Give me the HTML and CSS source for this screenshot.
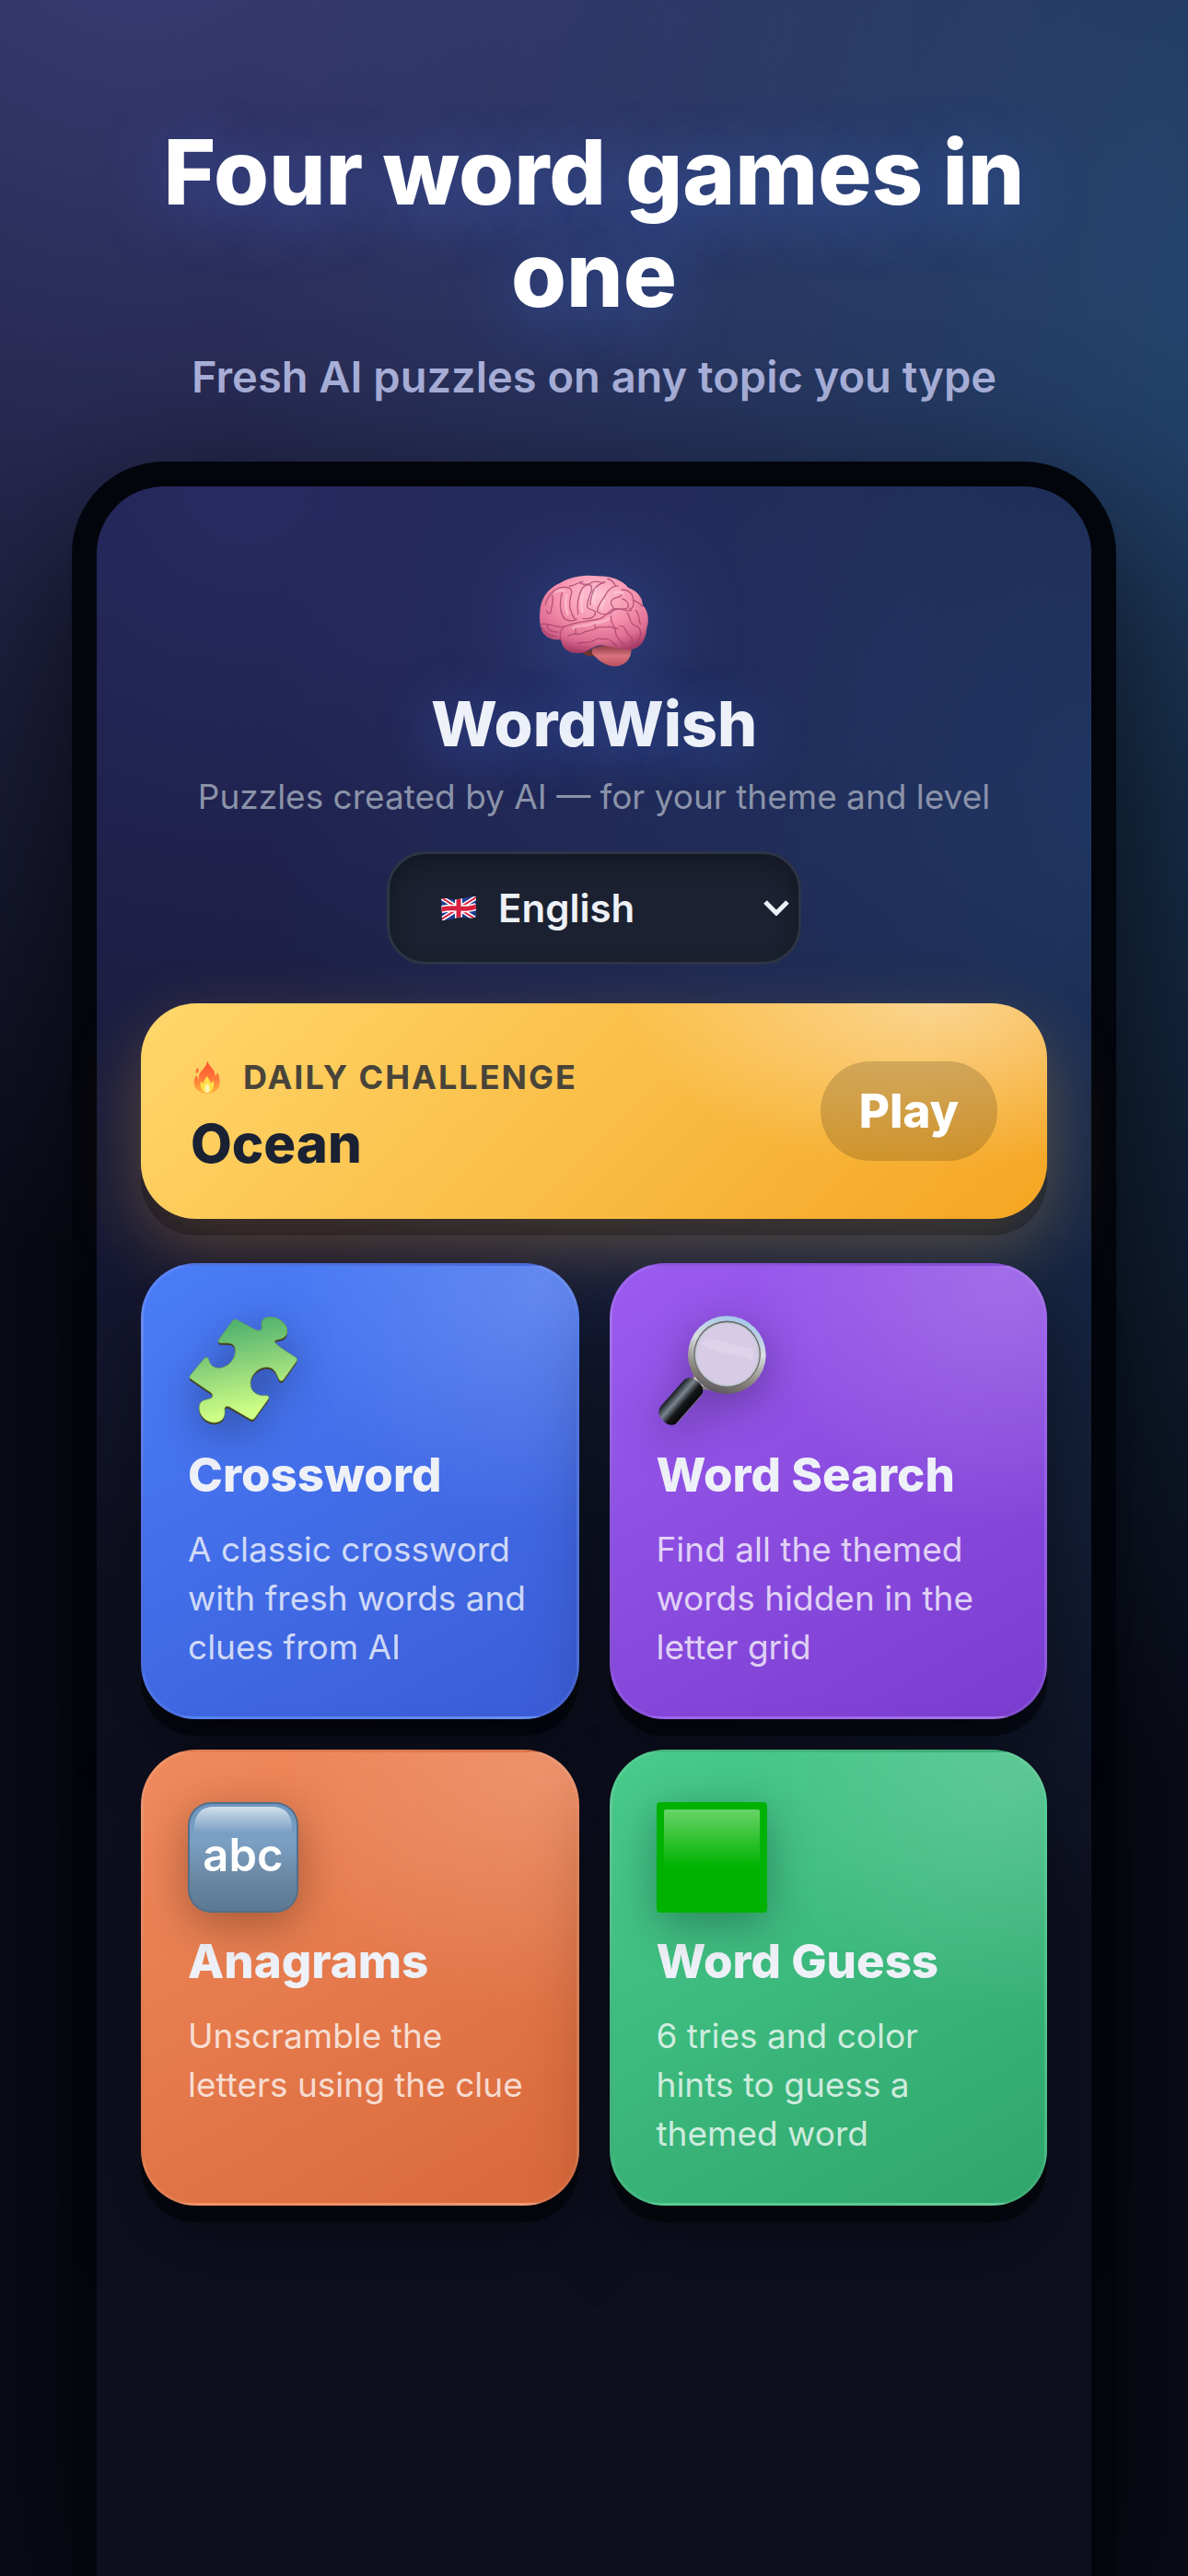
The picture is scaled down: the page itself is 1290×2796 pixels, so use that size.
FILE: index.html
```html
<!DOCTYPE html>
<html lang="en">
<head>
<meta charset="utf-8">
<meta name="viewport" content="width=device-width, initial-scale=1">
<title>WordWish</title>
<link rel="stylesheet" href="styles.css">
</head>
<body>
<div class="stage">
  <header class="promo">
    <h1 class="promo-title">Four word games in one</h1>
    <p class="promo-sub">Fresh AI puzzles on any topic you type</p>
  </header>

  <main class="phone">
    <div class="brand">
      <svg class="brain" viewBox="76 72 360 300" aria-hidden="true">
        <defs>
          <radialGradient id="brainFill" cx="0.52" cy="0.25" r="0.75">
            <stop offset="0" stop-color="#ffc4d4"/>
            <stop offset="0.45" stop-color="#f795b0"/>
            <stop offset="0.8" stop-color="#dd6d92"/>
            <stop offset="1" stop-color="#a83c66"/>
          </radialGradient>
          <linearGradient id="stemFill" x1="0" y1="0" x2="0" y2="1">
            <stop offset="0" stop-color="#8a3a44"/>
            <stop offset="0.5" stop-color="#d9737c"/>
            <stop offset="1" stop-color="#b9525f"/>
          </linearGradient>
        </defs>
        <path fill="#6d3532" d="M216 322l38-8 12 22c-16 2-42 2-50-14z"/>
        <path fill="url(#stemFill)" d="M250 312c30-14 90-14 128 0 0 38-26 58-56 58-34-2-56-24-72-42z"/>
        <path fill="url(#brainFill)" d="M80 190c2-40 26-76 66-92 36-22 84-27 124-22 46 0 78 14 98 38 30 10 46 32 47 58 16 14 22 44 13 73-3 42-23 66-52 70-42 2-70-12-98-14-26 2-40 24-74 26-34 0-52-18-54-38-2-12-4-4-20-6-26-4-44-20-46-38-6-18-6-38-4-55z"/>
        <g fill="none" stroke="#a3406a" stroke-width="4" stroke-linecap="round" stroke-linejoin="round" opacity="0.75">
          <path d="M98 168c6-26 26-52 56-56 26-2 34 8 26 30-8 30-2 52 14 74"/>
          <path d="M120 140c6 14-2 32-4 50-2 14-14 6-14-2"/>
          <path d="M152 130c-8 28-8 58 4 80 10 14 32 14 44 6"/>
          <path d="M204 200c-4-30 0-60 12-82 8-14 28-20 32-8 4 14-12 36-14 58-2 20 14 12 26 24 4 16-18 26-40 22"/>
          <path d="M250 130c8-18 22-30 42-34M244 170c-2-20 6-34 14-50"/>
          <path d="M266 192c2-24 18-38 26-52 8-18 26-34 42-32M266 192c18 12 42 12 52-4 6-20-14-14-4-34 10-12 30-6 32-18"/>
          <path d="M318 188c20-10 34-2 48-8 6-14-4-26-18-30M346 120c24 0 38 14 38 34 4 16-2 28-12 30M384 154c14 4 20 12 30 20"/>
          <path d="M84 232c30-6 54 18 82 6 40-16 72-14 104-22 26-6 30-28 54-34 22-2 34 10 54 6M160 240c-16 12-16 30-12 46"/>
          <path d="M170 272c16-14 30-2 48-10 18-14 34-6 44-16 14-8 22-2 34-4 18-6 26 8 38 4"/>
          <path d="M196 246v18M262 246l-4-14M204 294c24-4 38 2 54-10 16-12 26 2 38-4 14 2 22 12 34 24"/>
          <path d="M312 206c-6 26 18 32 14 52 2 22 22 32 32 46M340 238c22-2 18 26 34 34 8 4 6 14 4 20M364 196c10 6 6 28 20 38 10 6 22 4 24 26 0 16-8 28-16 38"/>
          <path d="M392 188c16 14 6 32 16 44M176 108c20 2 24-14 44-14M210 98c14 8 28 6 40-2 16-8 26 4 38 0M300 84c12 4 22 14 26 24M104 232c-2 14 8 26 36 26M88 246c10 20 28 26 46 26"/>
        </g>
        <g fill="none" stroke="#ffdbe4" stroke-width="9" stroke-linecap="round" opacity="0.4">
          <path d="M132 128c8-6 18-8 26-4M166 138c-4 24-2 44 4 62M222 128c-8 22-8 44-4 64M262 118c-10 16-10 34-4 48M290 156c-10 12-10 22-8 28M188 246c18-14 44-4 62-16 30-4 44-6 54-16M324 130c8-2 16-4 24 2"/>
        </g>
      </svg>
      <h2 class="brand-name">WordWish</h2>
      <p class="brand-sub">Puzzles created by AI — for your theme and level</p>
      <div class="lang">
        <svg class="lang-flag" viewBox="0 0 38 26" aria-hidden="true">
          <defs><clipPath id="flagClip"><path d="M0 3C7 0 11 5 19 3S32 0 38 0V22C30 26 26 21 18 23S7 26 1 26z"/></clipPath></defs>
          <g clip-path="url(#flagClip)">
            <path fill="#1d3c92" d="M0 0h38v26H0z"/>
            <path stroke="#fff" stroke-width="5" d="M0 1l38 24M0 25L38 1"/>
            <path stroke="#d8203f" stroke-width="2" d="M0 1l38 24M0 25L38 1"/>
            <path fill="none" stroke="#fff" stroke-width="8" d="M19 0v26M0 14q9-2 19-1t19-2"/>
            <path fill="none" stroke="#d8203f" stroke-width="5" d="M19 0v26M0 14q9-2 19-1t19-2"/>
          </g>
        </svg>
        <select class="lang-select" aria-label="Language">
          <option>English</option>
        </select>
        <svg class="lang-arrow" viewBox="0 0 28 18" aria-hidden="true"><path d="M2 3l12 12L26 3" fill="none" stroke="#eef1f8" stroke-width="5"/></svg>
      </div>
    </div>

    <section class="daily">
      <div class="daily-info">
        <p class="daily-label">
          <svg class="fire" viewBox="-3 0 36 36" aria-hidden="true">
            <defs><linearGradient id="fireFill" x1="0" y1="0" x2="0" y2="1"><stop offset="0" stop-color="#ff4d2e"/><stop offset="0.55" stop-color="#ff7a3a"/><stop offset="1" stop-color="#ffb53d"/></linearGradient></defs>
            <path fill="url(#fireFill)" d="M15 0c1 6 9 9 9 18l2-5c3 5 3 11 2 15-2 5-7 8-13 8S3 33 1 27c-1-5 0-8 2-11l3 5c-1-6 2-9 5-12 3-4 4-6 4-9z"/>
            <path fill="#ff6a3a" d="M5 8c1 2 1 4-1 6-2-1-2-4 1-6z"/>
            <path fill="#ffe14a" d="M15 17c2 4 3 5 4 8l3-3c1 7-1 12-7 13-7-1-8-7-7-12l3 2c0-3 2-5 4-8z"/>
            <path fill="#fff6b0" d="M15 25c4 4 3 10 0 10s-4-6 0-10z"/>
          </svg>
          <span>DAILY CHALLENGE</span>
        </p>
        <h3 class="daily-topic">Ocean</h3>
      </div>
      <button class="play" type="button">Play</button>
    </section>

    <section class="games">
      <a class="card card-blue" href="#crossword">
        <svg class="icon" viewBox="192 196 360 352" preserveAspectRatio="none" aria-hidden="true">
          <defs><linearGradient id="pieceFill" x1="0.4" y1="0" x2="0.6" y2="1"><stop offset="0.08" stop-color="#54b56f"/><stop offset="0.45" stop-color="#8dd37a"/><stop offset="0.9" stop-color="#d0ff86"/></linearGradient>
          <path id="piece" d="M340 210q5-4 12 0l58 30q18 8 22-2c3-12-6-22 10-34 28-10 60 4 72 30 4 18 0 30-18 36-14 4-24 2-20 12 12 14 40 30 66 46q8 4 4 14l-44 60q-10 6-14-4c-8-20-14-36-38-38-34 0-54 30-54 52 0 28 26 42 54 38q10 4 4 12l-44 60q-6 8-14 4l-70-40q-16-4-14 12c4 30-20 42-42 38-30-6-46-32-40-56 6-22 36-14 42-26 2-8-4-14-16-20l-54-36q-8-4-2-12l46-54q10-8 14 4c4 18 18 28 36 27 34-4 54-36 50-62-6-24-28-16-50-18q-8-4-2-12z"/></defs>
          <use href="#piece" y="6" fill="#3f3a1c"/>
          <use href="#piece" fill="url(#pieceFill)" stroke="#6f9a48" stroke-width="2"/>
        </svg>
        <h3 class="card-title">Crossword</h3>
        <p class="card-text">A classic crossword with fresh words and clues from AI</p>
      </a>

      <a class="card card-purple" href="#word-search">
        <svg class="icon" viewBox="220 196 360 352" preserveAspectRatio="none" aria-hidden="true">
          <defs>
            <linearGradient id="rim" x1="0.7" y1="0" x2="0.4" y2="1"><stop offset="0" stop-color="#9fc6ec"/><stop offset="0.4" stop-color="#d8dde0"/><stop offset="0.75" stop-color="#8c8880"/><stop offset="1" stop-color="#5c5a5c"/></linearGradient>
            <linearGradient id="handle" x1="0" y1="0" x2="1" y2="0"><stop offset="0" stop-color="#171b20"/><stop offset="0.35" stop-color="#7b868f"/><stop offset="0.65" stop-color="#15171a"/><stop offset="0.94" stop-color="#08090a"/><stop offset="1" stop-color="#8a8494"/></linearGradient>
          </defs>
          <path fill="#8a8480" d="M334 370q14 24-4 38l34 34q10-20 32-4z"/>
          <path fill="none" stroke="#e6dede" stroke-width="10" d="M342 394l28 28"/>
          <ellipse cx="449" cy="321" rx="127" ry="124" fill="url(#rim)"/>
          <ellipse cx="450" cy="318" rx="109" ry="106" fill="#6f6c70"/>
          <ellipse cx="450" cy="319" rx="105" ry="102" fill="#c3cbd2"/>
          <ellipse cx="450" cy="319" rx="100" ry="97" fill="#d8cbe6"/>
          <path fill="#e4dcf0" opacity="0.5" d="M366 284c40-30 90 10 170 18 0 14 0 22-4 36-60-30-110-10-166-54z"/>
          <rect x="-38" y="-84" width="76" height="168" rx="30" transform="translate(299 469) rotate(42)" fill="url(#handle)"/>
        </svg>
        <h3 class="card-title">Word Search</h3>
        <p class="card-text">Find all the themed words hidden in the letter grid</p>
      </a>

      <a class="card card-orange" href="#anagrams">
        <svg class="icon" viewBox="0 0 120 120" aria-hidden="true">
          <defs>
            <linearGradient id="tile" x1="0" y1="0" x2="0" y2="1"><stop offset="0" stop-color="#6d95bf"/><stop offset="0.35" stop-color="#7ba0c4"/><stop offset="0.7" stop-color="#6a87a2"/><stop offset="1" stop-color="#5c7892"/></linearGradient>
            <linearGradient id="tileShine" x1="0" y1="0" x2="0" y2="1"><stop offset="0" stop-color="#d3e0ec"/><stop offset="1" stop-color="#d3e0ec" stop-opacity="0"/></linearGradient>
          </defs>
          <rect width="120" height="120" rx="25" fill="#526f8b"/>
          <rect x="2" y="2" width="116" height="116" rx="23" fill="url(#tile)"/>
          <path fill="url(#tileShine)" d="M7 34V25Q9 6 27 5h66q18 1 20 20v9z"/>
          <text class="tile-text" x="60" y="75" text-anchor="middle">abc</text>
        </svg>
        <h3 class="card-title">Anagrams</h3>
        <p class="card-text">Unscramble the letters using the clue</p>
      </a>

      <a class="card card-green" href="#word-guess">
        <svg class="icon" viewBox="0 0 120 120" aria-hidden="true">
          <defs><linearGradient id="greenShine" x1="0" y1="0" x2="0" y2="1"><stop offset="0" stop-color="#68d468"/><stop offset="1" stop-color="#00b200"/></linearGradient></defs>
          <rect width="120" height="120" rx="4" fill="#00b200"/>
          <rect x="8" y="8" width="104" height="62" rx="2" fill="url(#greenShine)"/>
        </svg>
        <h3 class="card-title">Word Guess</h3>
        <p class="card-text">6 tries and color hints to guess a themed word</p>
      </a>
    </section>
  </main>
</div>
</body>
</html>
```
FILE: styles.css
```css
* { box-sizing: border-box; }

body {
  margin: 0;
  font-family: Inter, "Liberation Sans", sans-serif;
  color: #eef1f8;
  background: #0a0c18;
}

h1, h2, h3, p { margin: 0; }

.stage {
  display: flex;
  flex-direction: column;
  min-height: 100vh;
  padding: 131px 78px 0;
  overflow: hidden;
  background:
    radial-gradient(1500px 1500px at 12% -5%, rgba(112, 116, 225, 0.48), rgba(112, 116, 225, 0) 100%),
    radial-gradient(1100px 1600px at 105% 12%, rgba(55, 130, 195, 0.45), rgba(55, 130, 195, 0) 100%),
    #0a0c18;
}

.promo { padding-bottom: 63px; text-align: center; }

.promo-title {
  font-size: 97px;
  font-weight: 800;
  line-height: 111px;
  color: #fff;
  text-shadow: 0 12px 72px rgba(80, 130, 255, 0.45);
}

.promo-sub {
  margin-top: 27px;
  font-size: 47px;
  font-weight: 600;
  line-height: 58px;
  color: #abb2dc;
}

.phone {
  position: relative;
  display: flex;
  flex: 1;
  flex-direction: column;
  padding: 96px 48px;
  border: 27px solid #03050c;
  border-bottom: 0;
  border-radius: 100px 100px 0 0;
  background:
    radial-gradient(1300px 1200px at 15% 0, rgba(85, 88, 212, 0.37), rgba(85, 88, 212, 0) 100%),
    radial-gradient(950px 1200px at 105% 16%, rgba(50, 115, 190, 0.36), rgba(50, 115, 190, 0) 100%),
    #0e1020;
  box-shadow: 0 60px 180px rgba(0, 0, 0, 0.7);
}

.brand {
  display: flex;
  flex-direction: column;
  align-items: center;
  text-align: center;
}

.brain {
  width: 120px;
  height: 100px;
  filter: drop-shadow(0 12px 54px rgba(80, 135, 255, 0.4));
}

.brand-name {
  margin-top: 19px;
  font-size: 68px;
  font-weight: 800;
  line-height: 84px;
  text-shadow: 0 9px 60px rgba(80, 130, 255, 0.45);
}

.brand-sub {
  margin-top: 15px;
  font-size: 37px;
  line-height: 46px;
  color: #8b93a9;
}

.lang { position: relative; width: 450px; margin-top: 36px; }

.lang-select {
  display: block;
  width: 100%;
  height: 123px;
  padding: 0 60px 0 118px;
  border: 3px solid #2c3446;
  border-radius: 42px;
  appearance: none;
  font: 600 42px/50px Inter, "Liberation Sans", sans-serif;
  color: #eef1f8;
  background: #1b2130;
  box-shadow: inset 0 9px 24px rgba(0, 0, 0, 0.3);
}

.lang-flag, .lang-arrow { position: absolute; pointer-events: none; }
.lang-flag { top: 49px; left: 59px; width: 38px; height: 26px; }
.lang-arrow { top: 52px; right: 13px; width: 28px; height: 18px; }

.daily {
  display: flex;
  align-items: center;
  justify-content: space-between;
  height: 234px;
  margin-top: 42px;
  padding: 0 54px;
  border-radius: 60px;
  color: #1a2133;
  background:
    radial-gradient(340px 180px at 88% 0, rgba(255, 255, 255, 0.44), rgba(255, 255, 255, 0) 100%),
    linear-gradient(135deg, #ffd76b, #f5a523);
  box-shadow: 0 18px 0 rgba(0, 0, 0, 0.25), 0 30px 78px rgba(250, 180, 60, 0.3);
}

.daily-info { padding-top: 12px; }

.daily-label {
  display: flex;
  align-items: center;
  gap: 21px;
  font-size: 36px;
  font-weight: 700;
  line-height: 42px;
  letter-spacing: 2px;
  color: #494439;
}

.fire { width: 36px; height: 36px; }

.daily-topic {
  margin-top: 15px;
  font-size: 58px;
  font-weight: 800;
  line-height: 72px;
}

.play {
  width: 192px;
  height: 108px;
  padding: 0;
  border: 0;
  border-radius: 54px;
  font: 800 51px/62px Inter, "Liberation Sans", sans-serif;
  color: #fff;
  background: rgba(26, 20, 10, 0.18);
}

.games {
  display: grid;
  grid-template-columns: 1fr 1fr;
  gap: 33px;
  margin-top: 48px;
}

.card {
  padding: 54px 48px 49px;
  border: 3px solid rgba(255, 255, 255, 0.08);
  border-radius: 60px;
  color: #eef1f8;
  text-decoration: none;
  box-shadow: 0 18px 0 rgba(0, 0, 0, 0.45), 0 42px 84px rgba(0, 0, 0, 0.4);
}

.card-blue {
  background:
    radial-gradient(280px 260px at 92% 5%, rgba(255, 255, 255, 0.16), rgba(255, 255, 255, 0) 100%),
    linear-gradient(150deg, #4b7df9, #3a5cd6);
}

.card-purple {
  background:
    radial-gradient(280px 260px at 92% 5%, rgba(255, 255, 255, 0.16), rgba(255, 255, 255, 0) 100%),
    linear-gradient(150deg, #9b5bf0, #7a3dcf);
}

.card-orange {
  background:
    radial-gradient(280px 260px at 92% 5%, rgba(255, 255, 255, 0.16), rgba(255, 255, 255, 0) 100%),
    linear-gradient(150deg, #f08a5c, #d9683a);
}

.card-green {
  background:
    radial-gradient(280px 260px at 92% 5%, rgba(255, 255, 255, 0.16), rgba(255, 255, 255, 0) 100%),
    linear-gradient(150deg, #48cb8c, #2fa56c);
}

.icon {
  display: block;
  width: 120px;
  height: 120px;
  filter: drop-shadow(0 12px 24px rgba(0, 0, 0, 0.3));
}

.tile-text { font-size: 49px; font-weight: 600; fill: #fff; }

.card-title {
  margin-top: 22px;
  font-size: 51px;
  font-weight: 800;
  line-height: 62px;
}

.card-text {
  margin-top: 23px;
  font-size: 37px;
  line-height: 53px;
  color: rgba(255, 255, 255, 0.75);
}
```
